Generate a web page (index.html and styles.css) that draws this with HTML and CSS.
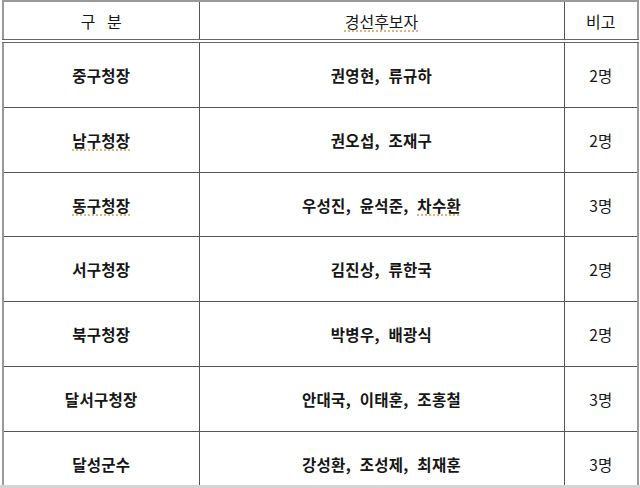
FILE: index.html
```html
<!DOCTYPE html>
<html lang="ko">
<head>
<meta charset="utf-8">
<link rel="stylesheet" href="styles.css">
</head>
<body>
<div class="frame">
<table class="grid">
<colgroup><col class="c1"><col class="c2"><col class="c3"></colgroup>
<thead>
<tr><th class="wide">구 분</th><th><span class="sp">경선후보자</span></th><th>비고</th></tr>
</thead>
<tbody>
<tr><td class="b">중구청장</td><td class="b n">권영현, 류규하</td><td>2명</td></tr>
<tr><td class="b"><span class="sp">남구청장</span></td><td class="b n">권오섭, 조재구</td><td>2명</td></tr>
<tr><td class="b"><span class="sp">동구청장</span></td><td class="b n">우성진, 윤석준, <span class="sp">차수환</span></td><td>3명</td></tr>
<tr><td class="b">서구청장</td><td class="b n">김진상, 류한국</td><td>2명</td></tr>
<tr><td class="b">북구청장</td><td class="b n">박병우, 배광식</td><td>2명</td></tr>
<tr><td class="b">달서구청장</td><td class="b n">안대국, 이태훈, 조홍철</td><td>3명</td></tr>
<tr><td class="b">달성군수</td><td class="b n">강성환, 조성제, 최재훈</td><td>3명</td></tr>
</tbody>
</table>
</div>
<div class="strip"></div>
</body>
</html>
```
FILE: styles.css
```css
html, body {
  margin: 0;
  padding: 0;
  background: #ffffff;
}
body {
  width: 640px;
  height: 488px;
  overflow: hidden;
  font-family: "Noto Sans CJK KR", "Noto Sans", sans-serif;
  color: #161616;
}
.frame {
  height: 485px;
  overflow: hidden;
  padding-left: 2px;
}
.grid {
  border-collapse: collapse;
  table-layout: fixed;
  width: 635px;
  border-top: 2px solid #9a9a9a;
  border-left: 2px solid #9a9a9a;
  border-right: 2px solid #9a9a9a;
}
.c1 { width: 196px; }
.c2 { width: 365px; }
.c3 { width: 74px; }
th, td {
  text-align: center;
  vertical-align: middle;
  padding: 0;
  border-left: 1px solid #555;
  border-right: 1px solid #555;
}
th {
  height: 37px;
  font-weight: 400;
  font-size: 16px;
  border-bottom: 4px double #666;
}
th.wide {
  word-spacing: 7px;
}
td {
  height: 63.83px;
  font-size: 15.5px;
  border-top: 1px solid #555;
  border-bottom: 1px solid #555;
}
td.b {
  font-weight: 700;
  letter-spacing: 0.3px;
}
td.n {
  word-spacing: 4px;
}
.sp {
  text-decoration: underline dotted #d9a25a;
  text-underline-offset: 3px;
}
.strip {
  height: 3px;
  background: #d4d4d4;
}
```
